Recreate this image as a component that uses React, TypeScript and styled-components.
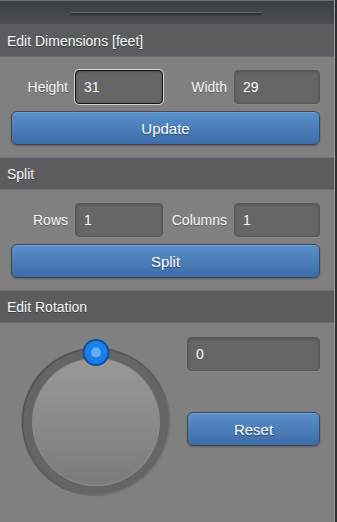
import React from "react";
import styled, { createGlobalStyle } from "styled-components";

const Global = createGlobalStyle`
  html, body { margin: 0; padding: 0; background: #2f3033; }
  body { font-family: "Liberation Sans", Arial, sans-serif; }
  * { box-sizing: border-box; }
`;

const Panel = styled.div`
  width: 335px;
  height: 522px;
  background: #808080;
  border-right: 1px solid #9d9d9d;
  overflow: hidden;
`;

const TopBar = styled.div`
  height: 24px;
  background: linear-gradient(#3b4045, #4a4e53);
  border-top: 1px solid #6b6e72;
  display: flex;
  align-items: center;
  justify-content: center;
`;

const Handle = styled.div`
  width: 190px;
  height: 3px;
  margin: 1px 0 0 -2px;
  border-top: 1px solid #62666a;
  border-bottom: 2px solid #2e3236;
`;

const Header = styled.div<{ $top?: boolean }>`
  height: 33px;
  display: flex;
  align-items: center;
  padding-left: 7px;
  background: #5b5c5f;
  border-top: 1px solid ${(p) => (p.$top ? "#5b5c5f" : "#737373")};
  border-bottom: 1px solid #6a6a6a;
  color: #f6f6f6;
  font-size: 14px;
  text-shadow: 0 1px 0 rgba(0, 0, 0, 0.35);
`;

const Content = styled.div`
  padding: 13px 14px 12px 11px;
  display: flex;
  flex-direction: column;
  gap: 7px;
`;

const FieldRow = styled.div`
  display: grid;
  grid-template-columns: 1fr 88px 1fr 86px;
  column-gap: 7px;
  align-items: center;
`;

const Label = styled.label`
  text-align: right;
  color: #f4f4f4;
  font-size: 14px;
  text-shadow: 0 1px 0 rgba(0, 0, 0, 0.3);
`;

const Input = styled.input<{ $focused?: boolean }>`
  height: 34px;
  width: 100%;
  padding: 0 8px;
  font-family: "Liberation Sans", Arial, sans-serif;
  font-size: 14px;
  color: #f8f8f8;
  background: #666666;
  border: 1px solid ${(p) => (p.$focused ? "#141414" : "#585858")};
  border-radius: 4px;
  outline: none;
  box-shadow: ${(p) =>
    p.$focused
      ? "0 0 0 1px rgba(235,235,235,0.75), inset 0 1px 3px rgba(0,0,0,0.25)"
      : "inset 0 1px 3px rgba(0,0,0,0.2), 0 1px 0 rgba(255,255,255,0.08)"};
`;

const Button = styled.button`
  height: 34px;
  width: 100%;
  border: 1px solid #3f4b5a;
  border-radius: 6px;
  background: linear-gradient(#5990cb, #3d6ca8);
  color: #ffffff;
  font-family: "Liberation Sans", Arial, sans-serif;
  font-size: 15px;
  text-shadow: 0 1px 1px rgba(0, 0, 0, 0.45);
  box-shadow: 0 1px 2px rgba(0, 0, 0, 0.3), inset 0 1px 0 rgba(255, 255, 255, 0.15);
  cursor: pointer;
`;

const RotationContent = styled.div`
  padding: 14px 14px 0 20px;
  display: flex;
  justify-content: space-between;
`;

const Knob = styled.svg`
  margin-top: 1px;
  display: block;
`;

const RightCol = styled.div`
  width: 133px;
  display: flex;
  flex-direction: column;
  gap: 41px;
`;

const Dial: React.FC = () => (
  <Knob width="152" height="162" viewBox="0 0 152 162">
    <defs>
      <linearGradient id="face" x1="0" y1="0" x2="0" y2="1">
        <stop offset="0" stopColor="#999999" />
        <stop offset="1" stopColor="#7b7b7b" />
      </linearGradient>
      <linearGradient id="rim" x1="0" y1="0" x2="1" y2="1">
        <stop offset="0" stopColor="#4d4e50" />
        <stop offset="0.6" stopColor="#5f6062" />
        <stop offset="1" stopColor="#8a8a8a" />
      </linearGradient>
    </defs>
    <circle cx="76" cy="84" r="74.5" fill="url(#rim)" />
    <circle cx="76" cy="84" r="72.5" fill="#646567" />
    <circle cx="76" cy="84" r="64" fill="#8c8c8c" />
    <circle cx="76" cy="84" r="63" fill="url(#face)" />
    <circle cx="76" cy="14.5" r="12.5" fill="#1c7fe6" stroke="#0f4e9c" strokeWidth="2" />
    <circle cx="76" cy="14.5" r="5" fill="#5fadff" />
  </Knob>
);

export default function App() {
  return (
    <>
      <Global />
      <Panel>
        <TopBar>
          <Handle />
        </TopBar>
        <Header $top>Edit Dimensions [feet]</Header>
        <Content>
          <FieldRow>
            <Label>Height</Label>
            <Input $focused defaultValue="31" />
            <Label>Width</Label>
            <Input defaultValue="29" />
          </FieldRow>
          <Button>Update</Button>
        </Content>
        <Header>Split</Header>
        <Content>
          <FieldRow>
            <Label>Rows</Label>
            <Input defaultValue="1" />
            <Label>Columns</Label>
            <Input defaultValue="1" />
          </FieldRow>
          <Button>Split</Button>
        </Content>
        <Header>Edit Rotation</Header>
        <RotationContent>
          <Dial />
          <RightCol>
            <Input defaultValue="0" />
            <Button>Reset</Button>
          </RightCol>
        </RotationContent>
      </Panel>
    </>
  );
}
